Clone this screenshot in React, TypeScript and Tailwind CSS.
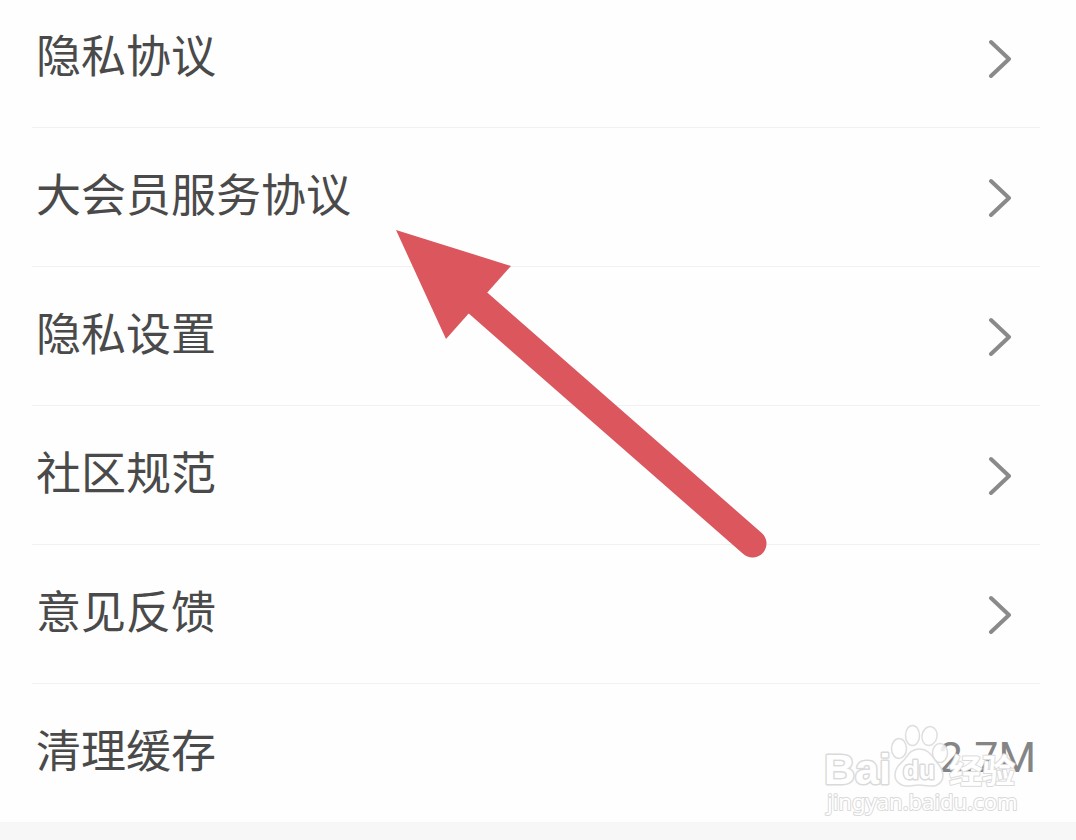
type SettingItem = {
  label: string;
  href?: string;
  value?: string;
};

const items: SettingItem[] = [
  { label: '隐私协议', href: '#privacy-policy' },
  { label: '大会员服务协议', href: '#vip-agreement' },
  { label: '隐私设置', href: '#privacy-settings' },
  { label: '社区规范', href: '#community-rules' },
  { label: '意见反馈', href: '#feedback' },
  { label: '清理缓存', value: '2.7M' },
];

const rowClass = 'flex w-full items-center justify-between pl-9 h-[138px] text-left';
const labelClass = 'pb-[10px]';

function Chevron() {
  return (
    <svg className="mr-16 h-10 w-6" viewBox="0 0 24 40" fill="none" aria-hidden="true">
      <path d="M3 4 21 21 3 38" stroke="#8a8a8a" strokeWidth="4" strokeLinecap="round" strokeLinejoin="round" />
    </svg>
  );
}

function Arrow() {
  return (
    <svg
      className="pointer-events-none absolute left-[396px] top-[241px]"
      width="372"
      height="328"
      viewBox="0 0 372 328"
      aria-hidden="true"
    >
      <path d="M82 73 356.5 313.5" stroke="#db565d" strokeWidth="28" strokeLinecap="round" />
      <path d="M0 0 115 36 50 109Z" fill="#db565d" />
    </svg>
  );
}

function Watermark() {
  return (
    <svg
      className="pointer-events-none absolute bottom-1 right-14"
      width="196"
      height="94"
      viewBox="0 0 196 94"
      fill="#fff"
      stroke="#dadada"
      strokeWidth="1.5"
      strokeLinejoin="round"
      aria-hidden="true"
    >
      <g fillOpacity="0.85" strokeOpacity="0.9">
        <ellipse cx="75" cy="24.5" rx="7.5" ry="10" />
        <ellipse cx="88.5" cy="11.5" rx="7" ry="10" />
        <ellipse cx="105.5" cy="12" rx="7.5" ry="9.5" transform="rotate(12 105.5 12)" />
        <ellipse cx="116" cy="29" rx="7.5" ry="9.5" />
        <path d="M95 25c-8 0-11 6-15 11-5 5-9 8-9 15 0 7 6 11 12 11 5 0 8-1 12-1s8 1 13 1c6 0 11-4 11-11 0-7-4-10-8-15-4-6-8-11-16-11Z" />
      </g>
      <g paintOrder="stroke" strokeWidth="3" fontWeight="700" className="font-['Liberation_Sans',sans-serif]">
        <text x="0" y="60" fontSize="43">
          Bai
        </text>
        <text x="79" y="55" fontSize="26">
          du
        </text>
        <text x="125" y="59" fontSize="33" strokeWidth="2" className="font-['Noto_Sans_CJK_SC',sans-serif]">
          经验
        </text>
        <text x="3" y="86" fontSize="22" fontWeight="400" strokeWidth="2" className="font-['Noto_Sans',sans-serif]">
          jingyan.baidu.com
        </text>
      </g>
    </svg>
  );
}

export default function App() {
  return (
    <main className="min-h-screen overflow-hidden bg-[#f7f7f7] font-['Noto_Sans_CJK_SC',sans-serif] text-[45px] leading-none text-[#4a4a4a]">
      {/* list is scrolled a little, the first row sits partly above the top edge */}
      <div className="relative -mt-[11px] bg-[#fefefe]">
        <ul>
          {items.map(({ label, href, value }) => (
            <li key={label}>
              {href ? (
                <>
                  <a href={href} className={rowClass}>
                    <span className={labelClass}>{label}</span>
                    <Chevron />
                  </a>
                  <div className="ml-8 mr-9 h-px bg-[#f1f1f1]" />
                </>
              ) : (
                <button type="button" className={rowClass}>
                  <span className={labelClass}>{label}</span>
                  <span className="mr-10 pt-2 font-[Roboto,sans-serif] text-[43px] text-[#858585]">{value}</span>
                </button>
              )}
            </li>
          ))}
        </ul>
        <Arrow />
        <Watermark />
      </div>
    </main>
  );
}
